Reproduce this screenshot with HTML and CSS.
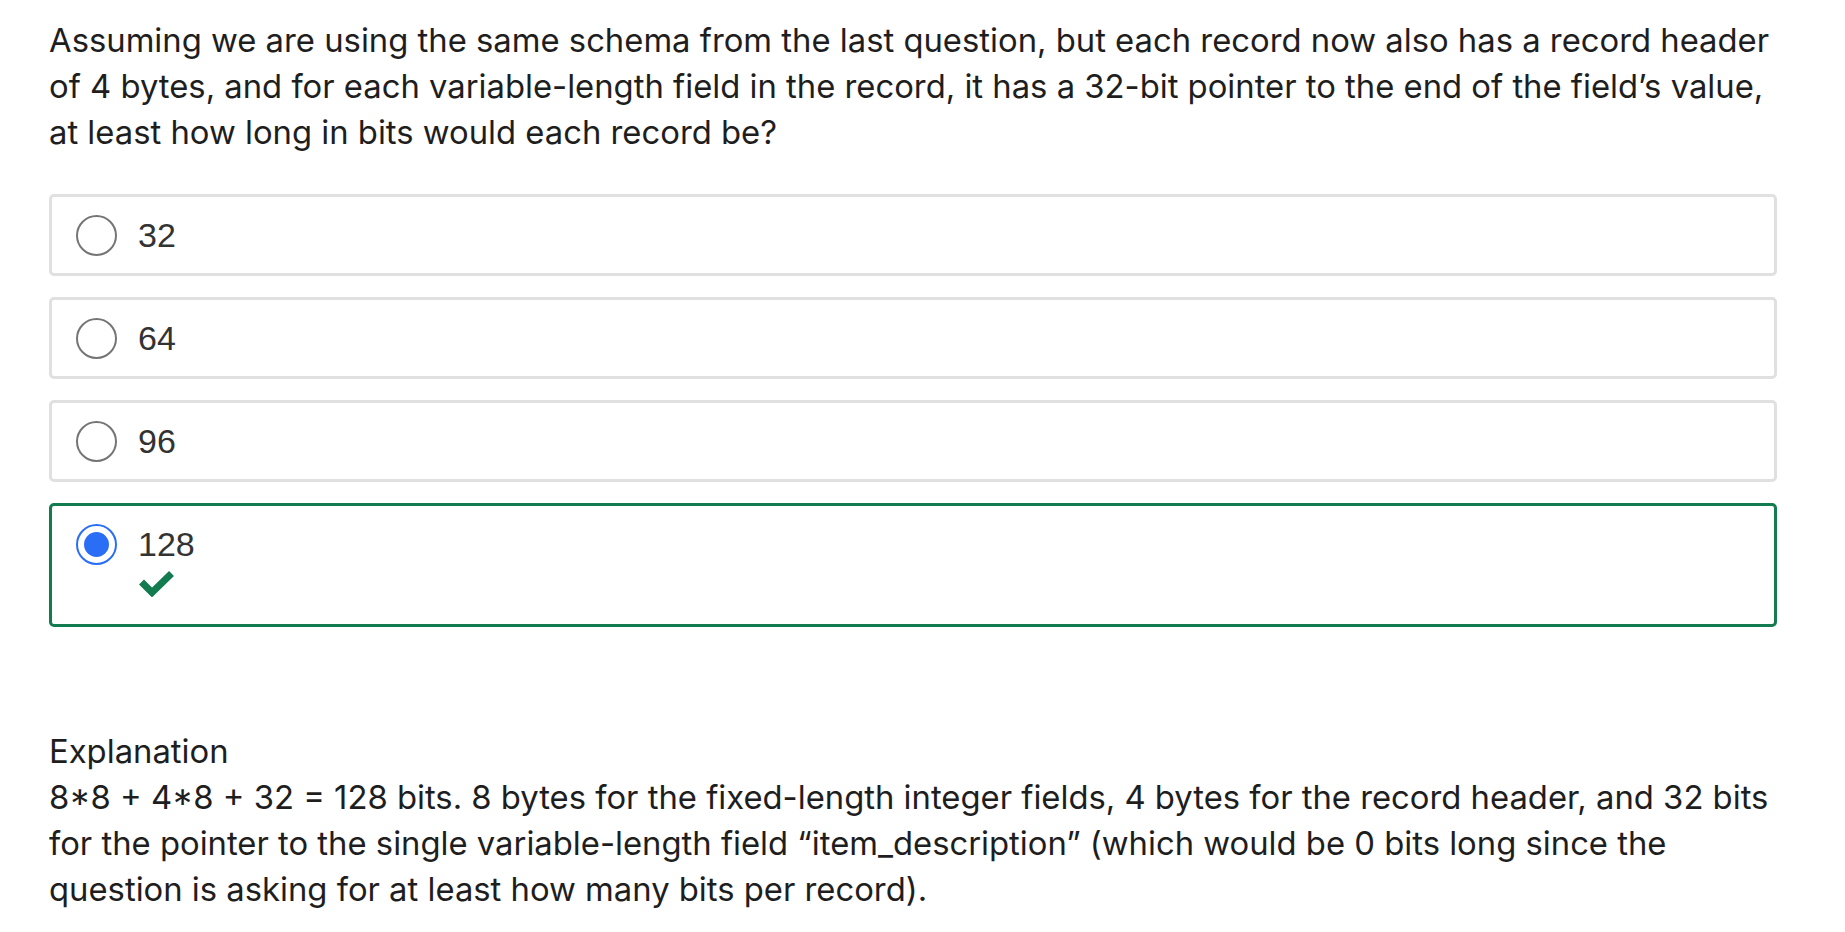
FILE: index.html
```html
<!DOCTYPE html>
<html>
<head>
<meta charset="utf-8">
<link rel="stylesheet" href="styles.css">
</head>
<body>
<div class="page">
  <p class="question">Assuming we are using the same schema from the last question, but each record now also has a record header of 4 bytes, and for each variable-length field in the record, it has a 32-bit pointer to the end of the field’s value, at least how long in bits would each record be?</p>
  <div class="options">
    <div class="option">
      <div class="row"><span class="radio"></span><span class="label">32</span></div>
    </div>
    <div class="option">
      <div class="row"><span class="radio"></span><span class="label">64</span></div>
    </div>
    <div class="option">
      <div class="row"><span class="radio"></span><span class="label">96</span></div>
    </div>
    <div class="option option-correct">
      <div class="row"><span class="radio radio-checked"></span><span class="label">128</span></div>
      <div class="feedback">
        <svg class="check" width="35" height="26" viewBox="0 0 35 26"><polyline points="2.5,11 13,21.5 32.5,2.5" fill="none" stroke="#127c50" stroke-width="7" stroke-linejoin="miter"/></svg>
      </div>
    </div>
  </div>
  <div class="explanation">
    <div class="exp-title">Explanation</div>
    <div class="exp-body">8*8 + 4*8 + 32 = 128 bits. 8 bytes for the fixed-length integer fields, 4 bytes for the record header, and 32 bits for the pointer to the single variable-length field “item_description” (which would be 0 bits long since the question is asking for at least how many bits per record).</div>
  </div>
</div>
</body>
</html>
```

FILE: styles.css
```css
html, body {
  margin: 0;
  padding: 0;
  background: #ffffff;
}

.page {
  padding: 17px 68px 0 49px;
  font-family: Inter, "Liberation Sans", sans-serif;
  color: #1e1e1e;
}

.question {
  margin: 0;
  font-size: 32.8px;
  line-height: 46px;
}

.options {
  margin-top: 39px;
  display: flex;
  flex-direction: column;
  gap: 21px;
}

.option {
  border: 3px solid #e0e0e0;
  border-radius: 5px;
  padding: 15px 24px;
}

.option-correct {
  border-color: #127c50;
  padding-bottom: 27px;
}

.row {
  display: flex;
  align-items: center;
  height: 46px;
}

.radio {
  box-sizing: border-box;
  width: 41px;
  height: 41px;
  border-radius: 50%;
  border: 2px solid #757575;
  flex: none;
  position: relative;
}

.radio-checked {
  border-color: #2b6ef6;
}

.radio-checked::after {
  content: "";
  position: absolute;
  left: 6px;
  top: 6px;
  width: 25px;
  height: 25px;
  border-radius: 50%;
  background: #2b6ef6;
}

.label {
  margin-left: 21px;
  font-family: "Liberation Sans", Arial, sans-serif;
  font-size: 34px;
  line-height: 46px;
  color: #333333;
}

.feedback {
  margin-top: 4px;
  padding-left: 63px;
  height: 26px;
}

.check {
  display: block;
}

.explanation {
  margin-top: 101px;
  font-size: 32.8px;
  line-height: 46px;
}
```
